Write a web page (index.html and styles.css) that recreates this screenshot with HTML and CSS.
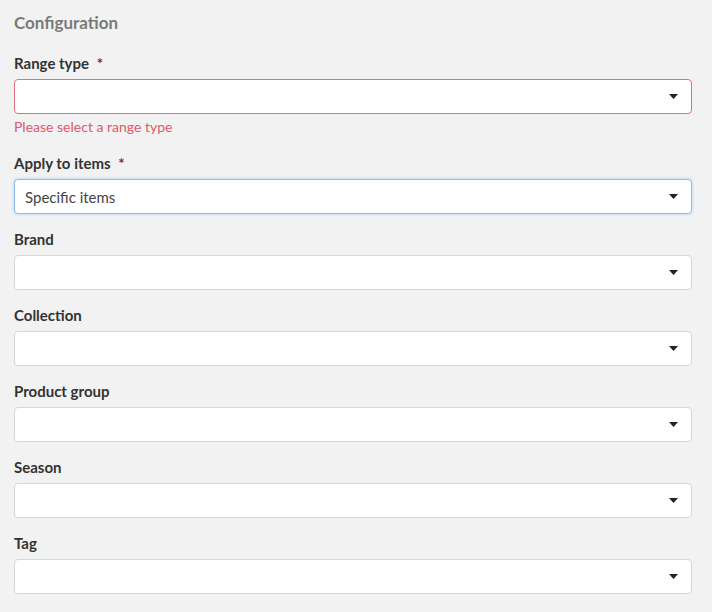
FILE: index.html
```html
<!DOCTYPE html>
<html lang="en">
<head>
  <meta charset="UTF-8">
  <title>Configuration</title>
  <link rel="stylesheet" href="styles.css">
</head>
<body>
  <div class="config">
    <h2>Configuration</h2>

    <div class="field">
      <label>Range type <span class="req">*</span></label>
      <div class="select invalid">
        <span class="value"></span>
        <svg class="caret" width="9" height="5" viewBox="0 0 9 5"><path d="M0 0h9L4.5 5z"/></svg>
      </div>
      <div class="error">Please select a range type</div>
    </div>

    <div class="field">
      <label>Apply to items <span class="req">*</span></label>
      <div class="select focus">
        <span class="value">Specific items</span>
        <svg class="caret" width="9" height="5" viewBox="0 0 9 5"><path d="M0 0h9L4.5 5z"/></svg>
      </div>
    </div>

    <div class="field">
      <label>Brand</label>
      <div class="select">
        <span class="value"></span>
        <svg class="caret" width="9" height="5" viewBox="0 0 9 5"><path d="M0 0h9L4.5 5z"/></svg>
      </div>
    </div>

    <div class="field">
      <label>Collection</label>
      <div class="select">
        <span class="value"></span>
        <svg class="caret" width="9" height="5" viewBox="0 0 9 5"><path d="M0 0h9L4.5 5z"/></svg>
      </div>
    </div>

    <div class="field">
      <label>Product group</label>
      <div class="select">
        <span class="value"></span>
        <svg class="caret" width="9" height="5" viewBox="0 0 9 5"><path d="M0 0h9L4.5 5z"/></svg>
      </div>
    </div>

    <div class="field">
      <label>Season</label>
      <div class="select">
        <span class="value"></span>
        <svg class="caret" width="9" height="5" viewBox="0 0 9 5"><path d="M0 0h9L4.5 5z"/></svg>
      </div>
    </div>

    <div class="field">
      <label>Tag</label>
      <div class="select">
        <span class="value"></span>
        <svg class="caret" width="9" height="5" viewBox="0 0 9 5"><path d="M0 0h9L4.5 5z"/></svg>
      </div>
    </div>
  </div>
</body>
</html>
```

FILE: styles.css
```css
body {
  margin: 0;
  background: #f2f2f2;
  font-family: 'Lato', 'Noto Sans', sans-serif;
  color: #333;
}

.config {
  width: 678px;
  padding: 13px 0 0 14px;
  display: flex;
  flex-direction: column;
  gap: 16px;
}

h2 {
  margin: 0 0 5px;
  font-size: 17px;
  line-height: 20px;
  font-weight: 700;
  color: #7a7a7a;
}

.field {
  display: flex;
  flex-direction: column;
}

label {
  font-size: 15px;
  line-height: 18px;
  font-weight: 700;
  color: #333;
  margin-bottom: 7px;
}

.req {
  color: #a0192a;
  margin-left: 4px;
}

.select {
  height: 35px;
  box-sizing: border-box;
  background: white;
  border: 1px solid #d6d6d6;
  border-radius: 4px;
  display: flex;
  align-items: center;
  justify-content: space-between;
  padding: 0 13px 0 10px;
}

.select.invalid {
  border-color: #e0707e;
}

.select.focus {
  border-color: #8cc0ec;
  box-shadow: 0 0 3px rgba(100, 160, 230, 0.5);
}

.value {
  font-size: 15px;
  color: #444;
}

.caret {
  fill: #222;
}

.error {
  margin: 5px 0 3px;
  font-size: 14px;
  line-height: 16px;
  color: #e0596b;
}
```
